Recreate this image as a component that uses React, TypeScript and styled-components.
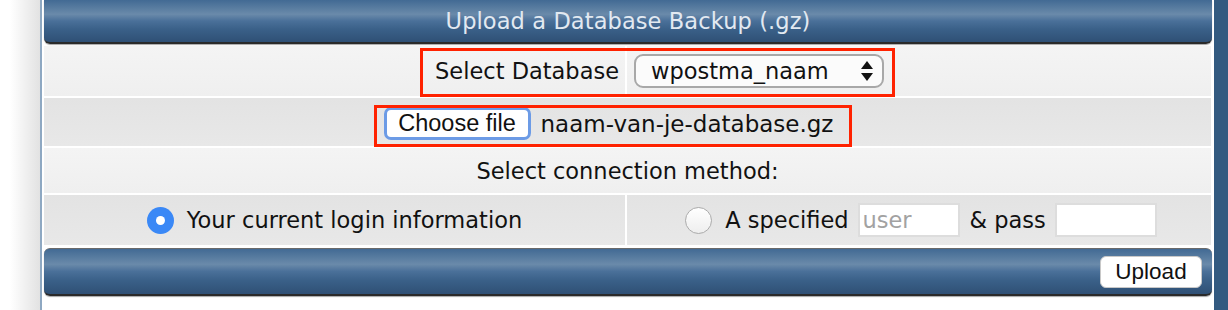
import styled, { createGlobalStyle } from "styled-components";

const GlobalStyle = createGlobalStyle`
  html, body {
    margin: 0;
    padding: 0;
    background: #ffffff;
  }
  body {
    font-family: "DejaVu Sans", Verdana, sans-serif;
    color: #111;
  }
`;

const Page = styled.div`
  display: flex;
  width: 1228px;
  height: 310px;
  overflow: hidden;
`;

const Gutter = styled.div`
  width: 40px;
  flex: none;
  background: linear-gradient(to right, #ffffff 0px, #ffffff 10px, #e2e2e2 40px);
`;

const Panel = styled.div`
  position: relative;
  width: 1167px;
  flex: none;
  border-left: 2px solid #8ea8c2;
  padding: 0 3px 0 2px;
  background: #ffffff;
`;

const RightStrip = styled.div`
  flex: 1;
  background: #335a80;
`;

const Bar = styled.div<{ $top?: boolean }>`
  height: ${(p) => (p.$top ? "44px" : "48px")};
  margin-top: ${(p) => (p.$top ? "0" : "3px")};
  margin-right: -1px;
  border-radius: ${(p) => (p.$top ? "0 0 6px 6px" : "6px")};
  border-top: ${(p) => (p.$top ? "none" : "1px solid #6a6a6a")};
  border-bottom: 2px solid #2a2a2a;
  box-shadow: 0 1px 1px rgba(0, 0, 0, 0.35);
  background: linear-gradient(
    to bottom,
    #426a94 0%,
    #5c7fa2 22%,
    #6a8aaa 34%,
    #4a7099 50%,
    #3a6088 70%,
    #2f5075 100%
  );
  display: flex;
  align-items: center;
  justify-content: ${(p) => (p.$top ? "center" : "flex-end")};
  padding: 0 10px;
  box-sizing: border-box;
`;

const Title = styled.div`
  color: #e2e9f1;
  font-size: 22.5px;
  letter-spacing: 0.1px;
`;

const Table = styled.div`
  display: grid;
  grid-template-columns: 581px 1fr;
  gap: 2px;
  margin-top: 2px;
`;

const Cell = styled.div<{
  $shade: "light" | "dark";
  $span?: boolean;
  $align?: "left" | "right" | "center";
  $h: number;
  $shift?: number;
}>`
  grid-column: ${(p) => (p.$span ? "1 / span 2" : "auto")};
  height: ${(p) => p.$h}px;
  background: ${(p) =>
    p.$shade === "light"
      ? "linear-gradient(to bottom, #f4f4f4, #efefef)"
      : "linear-gradient(to bottom, #e3e3e3, #e8e8e8)"};
  display: flex;
  align-items: center;
  justify-content: ${(p) =>
    p.$align === "right" ? "flex-end" : p.$align === "left" ? "flex-start" : "center"};
  padding: ${(p) =>
    p.$align === "right"
      ? "0 6px 0 0"
      : p.$align === "left"
      ? "0 0 0 7px"
      : `0 0 0 ${p.$shift ?? 0}px`};
  box-sizing: border-box;
  font-size: 22.5px;
  white-space: nowrap;
`;

const SelectBox = styled.div`
  width: 250px;
  height: 34px;
  box-sizing: border-box;
  border: 2px solid #a8a8a8;
  border-radius: 9px;
  background: #fbfbfb;
  display: flex;
  align-items: center;
  justify-content: space-between;
  padding: 0 8px 0 15px;
  font-size: 22.5px;
`;

const FileInput = styled.div`
  display: flex;
  align-items: center;
  margin-top: 3px;
  padding-right: 38px;
`;

const FileButton = styled.div`
  width: 147px;
  height: 33px;
  box-sizing: border-box;
  border: 3px solid #6c9be6;
  border-radius: 7px;
  background: #ffffff;
  display: flex;
  align-items: center;
  justify-content: center;
  font-family: "Liberation Sans", Arial, sans-serif;
  font-size: 23.5px;
  margin-right: 10px;
`;

const FileName = styled.span`
  font-size: 23px;
`;

const Radio = styled.span<{ $checked?: boolean }>`
  width: 27px;
  height: 27px;
  border-radius: 50%;
  box-sizing: border-box;
  flex: none;
  margin-right: 13px;
  display: flex;
  align-items: center;
  justify-content: center;
  background: ${(p) =>
    p.$checked ? "#3a88f6" : "linear-gradient(to bottom, #ffffff, #eeeeee)"};
  border: ${(p) => (p.$checked ? "none" : "1px solid #ababab")};
  &::after {
    content: "";
    display: ${(p) => (p.$checked ? "block" : "none")};
    width: 9px;
    height: 9px;
    border-radius: 50%;
    background: #ffffff;
  }
`;

const TextInput = styled.div<{ $last?: boolean }>`
  width: 102px;
  height: 34px;
  box-sizing: border-box;
  border: 2px solid #dddddd;
  background: #ffffff;
  margin: ${(p) => (p.$last ? "0 0 0 9px" : "0 10px 0 9px")};
  display: flex;
  align-items: center;
  padding-left: 3px;
  font-size: 22.5px;
  color: #a2a2a2;
`;

const UploadButton = styled.div`
  height: 32px;
  width: 102px;
  box-sizing: border-box;
  border-radius: 6px;
  background: #ffffff;
  border: 1px solid #c8c8c8;
  display: flex;
  align-items: center;
  justify-content: center;
  font-family: "Liberation Sans", Arial, sans-serif;
  font-size: 22.5px;
  color: #111;
`;

const Highlight = styled.div<{ $x: number; $y: number; $w: number; $h: number }>`
  position: absolute;
  left: ${(p) => p.$x}px;
  top: ${(p) => p.$y}px;
  width: ${(p) => p.$w}px;
  height: ${(p) => p.$h}px;
  border: 3px solid #ff2200;
  box-sizing: border-box;
  pointer-events: none;
`;

const Arrows = () => (
  <svg width="14" height="22" viewBox="0 0 14 22">
    <path d="M7 1 L13 9 L1 9 Z" fill="#111" />
    <path d="M1 13 L13 13 L7 21 Z" fill="#111" />
  </svg>
);

export default function App() {
  return (
    <>
      <GlobalStyle />
      <Page>
        <Gutter />
        <Panel>
          <Bar $top>
            <Title>Upload a Database Backup (.gz)</Title>
          </Bar>
          <Table>
            <Cell $shade="light" $align="right" $h={50}>
              Select Database
            </Cell>
            <Cell $shade="light" $align="left" $h={50}>
              <SelectBox>
                <span>wpostma_naam</span>
                <Arrows />
              </SelectBox>
            </Cell>
            <Cell $shade="dark" $span $h={48}>
              <FileInput>
                <FileButton>Choose file</FileButton>
                <FileName>naam-van-je-database.gz</FileName>
              </FileInput>
            </Cell>
            <Cell $shade="light" $span $h={45}>
              Select connection method:
            </Cell>
            <Cell $shade="dark" $h={50}>
              <Radio $checked />
              Your current login information
            </Cell>
            <Cell $shade="dark" $h={50} $shift={4}>
              <Radio />
              A specified
              <TextInput>user</TextInput>
              &amp; pass
              <TextInput $last />
            </Cell>
          </Table>
          <Bar>
            <UploadButton>Upload</UploadButton>
          </Bar>
          <Highlight $x={378} $y={48} $w={475} $h={49} />
          <Highlight $x={332} $y={105} $w={478} $h={42} />
        </Panel>
        <RightStrip />
      </Page>
    </>
  );
}
